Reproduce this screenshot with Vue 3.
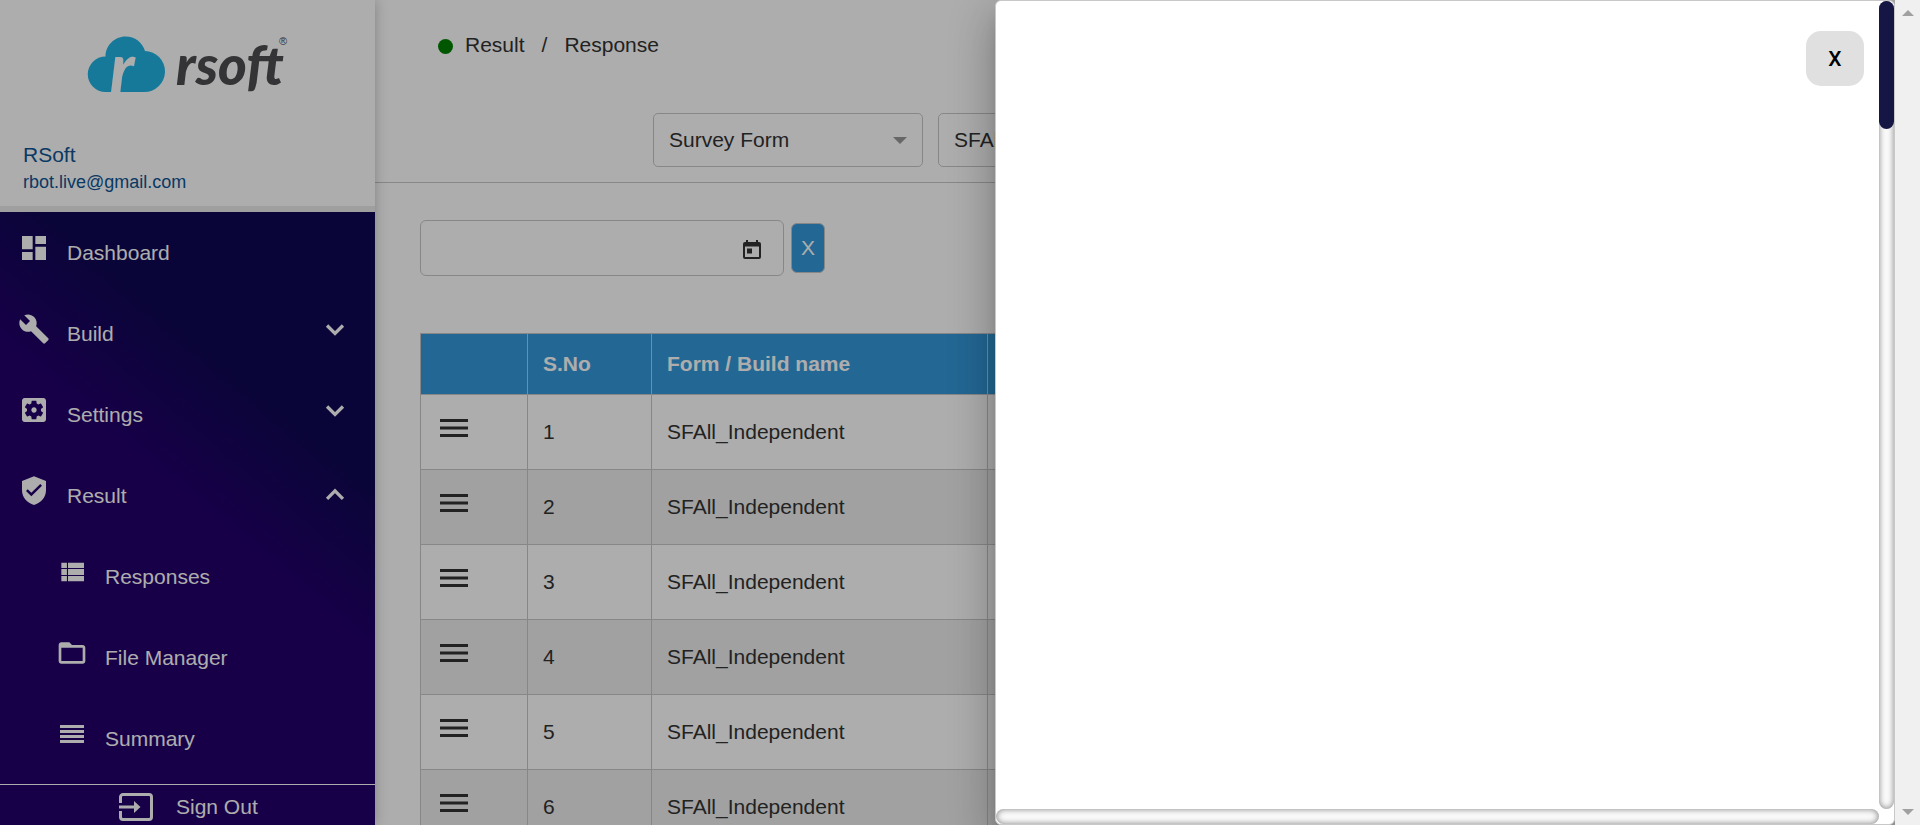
<script setup>
import { ref } from 'vue'

const menu = [
  { label: 'Dashboard', icon: 'M3 13h8V3H3v10zm0 8h8v-6H3v6zm10 0h8V11h-8v10zm0-18v6h8V3h-8z' },
  { label: 'Build', arrow: 'down', icon: 'M22.700 19l-9.100-9.100c.9-2.300.4-5-1.500-6.900-2-2-5-2.400-7.400-1.300L9 6 6 9 1.600 4.700C.4 7.100.9 10.100 2.900 12.100c1.900 1.900 4.600 2.400 6.900 1.500l9.100 9.100c.4.4 1 .4 1.400 0l2.300-2.300c.5-.4.5-1.100.1-1.400z' },
  { label: 'Settings', arrow: 'down', icon: 'M12 10c-1.100 0-2 .9-2 2s.9 2 2 2 2-.9 2-2-.9-2-2-2zm7-7H5c-1.110 0-2 .9-2 2v14c0 1.100.89 2 2 2h14c1.110 0 2-.9 2-2V5c0-1.100-.89-2-2-2zm-1.750 9c0 .23-.02.46-.05.68l1.480 1.160c.13.11.17.3.08.45l-1.400 2.420c-.09.15-.27.21-.43.15l-1.740-.7c-.36.28-.76.51-1.180.69l-.26 1.850c-.03.17-.18.3-.35.3h-2.800c-.17 0-.32-.13-.35-.29l-.26-1.850c-.43-.18-.82-.41-1.180-.69l-1.740.7c-.16.06-.34 0-.43-.15l-1.400-2.420c-.09-.15-.05-.34.08-.45l1.480-1.160c-.03-.23-.05-.46-.05-.69 0-.23.02-.46.05-.68l-1.480-1.160c-.13-.11-.17-.3-.08-.45l1.400-2.420c.09-.15.27-.21.43-.15l1.740.7c.36-.28.76-.51 1.180-.69l.26-1.850c.03-.17.18-.3.35-.3h2.800c.17 0 .32.13.35.29l.26 1.850c.43.18.82.41 1.180.69l1.740-.7c.16-.06.34 0 .43.15l1.400 2.420c.09.15.05.34-.08.45l-1.480 1.160c.03.23.05.46.05.69z' },
  { label: 'Result', arrow: 'up', icon: 'M12 1L3 4.500v7c0 5.300 3.800 9.600 9 11 5.200-1.400 9-5.700 9-11v-7L12 1zM10 16l-4-4 1.300-1.300 2.700 2.700 6.700-6.700L18 8l-8 8z' },
  { label: 'Responses', sub: true, icon: 'M4 5h4.200v4H4zM9 5h12v4H9zM4 9.750h4.200v4.500H4zM9 9.750h12v4.500H9zM4 15h4.200v4H4zM9 15h12v4H9z' },
  { label: 'File Manager', sub: true, icon: 'M20 6h-8l-2-2H4c-1.100 0-2 .9-2 2v12c0 1.100.9 2 2 2h16c1.100 0 2-.9 2-2V8c0-1.100-.9-2-2-2zm0 12H4V8h16v10z' },
  { label: 'Summary', sub: true, icon: 'M3 5.250h18v2.250H3zM3 9h18v2.250H3zM3 12.750h18v2.250H3zM3 16.500h18v2.250H3z' }
]

const rows = [1, 2, 3, 4, 5, 6].map((no) => ({ no, name: 'SFAll_Independent' }))
const formType = ref('Survey Form')
const formName = ref('SFAll_Independent')
const date = ref('')
</script>

<template>
  <div class="page">
    <aside class="sidebar">
      <header class="brand">
        <svg class="logo" viewBox="0 0 206 70" role="img" aria-label="rsoft">
          <path class="cloud" d="M18.500 60a17.500 17.500 0 0 1 0-35.500c0-11 9-20 20-20 9.500 0 17 6 19.500 14.500A20.500 20.500 0 0 1 57 60z" />
          <text class="cloud-letter" x="23" y="60">r</text>
          <text class="wordmark" x="89" y="53">rsoft</text>
          <text class="mark" x="192" y="13">®</text>
        </svg>
        <div class="user">RSoft</div>
        <div class="email">rbot.live@gmail.com</div>
      </header>
      <nav class="nav">
        <a v-for="item in menu" :key="item.label" href="#" class="nav-item" :class="{ sub: item.sub }">
          <svg class="icon" viewBox="0 0 24 24"><path :d="item.icon" fill-rule="evenodd" /></svg>
          <span class="nav-label">{{ item.label }}</span>
          <svg v-if="item.arrow" class="arrow" viewBox="0 0 24 24">
            <path v-if="item.arrow === 'down'" d="M6.700 9L12 14.300l5.300-5.300" />
            <path v-else d="M6.700 16.600L12 11.300l5.300 5.300" />
          </svg>
        </a>
      </nav>
      <button type="button" class="sign-out">
        <svg class="exit" viewBox="0 0 34 28">
          <path d="M1.500 10V4a2.500 2.500 0 0 1 2.500-2.500h26A2.500 2.500 0 0 1 32.500 4v20a2.500 2.500 0 0 1-2.500 2.500H4A2.500 2.500 0 0 1 1.500 24v-6" fill="none" stroke="#fff" stroke-width="3" />
          <path d="M0 12.500h15V8l6.500 6-6.500 6v-4.500H0z" />
        </svg>
        <span>Sign Out</span>
      </button>
    </aside>

    <main class="main">
      <header class="top">
        <div class="crumbs">
          <span class="dot"></span><span>Result</span><span class="slash">/</span><span>Response</span>
        </div>
        <div class="filters">
          <div class="picker">
            <select v-model="formType" aria-label="Form type"><option>Survey Form</option></select>
            <svg class="caret" viewBox="0 0 14 7"><path d="M0 0h14L7 7z" /></svg>
          </div>
          <div class="picker">
            <select v-model="formName" aria-label="Form name"><option>SFAll_Independent</option></select>
            <svg class="caret" viewBox="0 0 14 7"><path d="M0 0h14L7 7z" /></svg>
          </div>
        </div>
      </header>
      <section class="content">
        <div class="date-row">
          <label class="date">
            <input v-model="date" type="text" aria-label="Date" />
            <svg class="calendar" viewBox="0 0 18 19">
              <path fill-rule="evenodd" d="M3 0h2v2h8V0h2v2h1a2 2 0 0 1 2 2v13a2 2 0 0 1-2 2H2a2 2 0 0 1-2-2V4a2 2 0 0 1 2-2h1zM2 6.500V17h14V6.500zM4 8.500h5v5H4z" />
            </svg>
          </label>
          <button type="button" class="clear">X</button>
        </div>
        <table class="grid">
          <colgroup><col class="c-menu" /><col class="c-no" /><col class="c-name" /><col /></colgroup>
          <thead>
            <tr><th></th><th>S.No</th><th>Form / Build name</th><th></th></tr>
          </thead>
          <tbody>
            <tr v-for="row in rows" :key="row.no">
              <td>
                <button type="button" class="row-menu" aria-label="Row menu">
                  <svg viewBox="0 0 28 18"><path d="M0 0h28v3H0zM0 7.500h28v3H0zM0 15h28v3H0z" /></svg>
                </button>
              </td>
              <td>{{ row.no }}</td>
              <td>{{ row.name }}</td>
              <td></td>
            </tr>
          </tbody>
        </table>
      </section>
    </main>

    <div class="gutter">
      <svg viewBox="0 0 12 6"><path d="M0 6L6 0l6 6z" /></svg>
      <svg viewBox="0 0 12 6"><path d="M0 0h12L6 6z" /></svg>
    </div>

    <div class="overlay">
      <section class="drawer" role="dialog" aria-label="Response details">
        <div class="drawer-body">
          <button type="button" class="close">X</button>
        </div>
        <div class="track vertical"><div class="thumb"></div></div>
        <div class="track horizontal"></div>
      </section>
    </div>
  </div>
</template>

<style>
body {
  overflow: hidden;
}
</style>

<style scoped>
.page {
  position: relative;
  display: grid;
  grid-template-columns: 375px minmax(0, 1fr) 25px;
  height: 100vh;
  overflow: hidden;
  background: #fff;
  color: #333;
  font-family: "Liberation Sans", Arial, sans-serif;
  font-size: 21px;
  line-height: 24px;
}
button, input, select {
  font: inherit;
}
.sidebar {
  z-index: 1;
  display: flex;
  flex-direction: column;
  min-height: 0;
  background: #fff;
  box-shadow: 0 0 12px rgba(0, 0, 0, 0.25);
}
.brand {
  box-sizing: border-box;
  flex: none;
  height: 212px;
  padding: 32px 23px 0;
  border-bottom: 6px solid #ebebeb;
  color: #0e5595;
}
.logo {
  display: block;
  width: 206px;
  height: 70px;
  margin: 0 0 41px 64px;
}
.cloud {
  fill: #22b3e4;
}
.cloud-letter, .wordmark {
  font-family: Lato, sans-serif;
  font-style: italic;
  font-weight: 900;
}
.cloud-letter {
  fill: #fff;
  font-size: 68px;
}
.wordmark {
  fill: #4d4d50;
  font-size: 55px;
}
.mark {
  fill: #4d4d50;
  font-size: 11px;
}
.email {
  margin-top: 3px;
  font-size: 18px;
}
.nav {
  flex: 1;
  min-height: 0;
  overflow: hidden;
  background: linear-gradient(220deg, #0f0853 31%, #22006b 50%);
}
.nav-item {
  display: flex;
  align-items: center;
  height: 81px;
  padding: 0 22px 0 18px;
  color: #fff;
  text-decoration: none;
}
.nav-item.sub {
  padding-left: 56px;
}
.icon {
  width: 32px;
  height: 32px;
  margin: 0 17px 9px 0;
  fill: #fff;
}
.arrow {
  width: 36px;
  height: 36px;
  margin: 0 0 7px auto;
  fill: none;
  stroke: #fff;
  stroke-width: 2.200;
}
.sign-out {
  display: flex;
  flex: none;
  gap: 23px;
  align-items: center;
  height: 41px;
  padding: 3px 0 0 119px;
  border: 0;
  border-top: 1px solid #fff;
  background: #22006b;
  color: #fff;
}
.exit {
  width: 34px;
  height: 28px;
  fill: #fff;
}
.main {
  min-width: 0;
  overflow: hidden;
}
.top {
  padding: 33px 0 15px 63px;
  border-bottom: 1px solid #c8c8c8;
}
.crumbs {
  display: flex;
  align-items: center;
}
.dot {
  width: 15px;
  height: 15px;
  margin: 3px 12px 0 0;
  border-radius: 50%;
  background: #008000;
}
.slash {
  margin: 0 17px;
}
.filters {
  display: flex;
  gap: 15px;
  margin: 56px 0 0 215px;
}
.picker {
  position: relative;
  flex: none;
  width: 270px;
}
.picker select {
  box-sizing: border-box;
  display: block;
  width: 100%;
  height: 54px;
  padding: 0 36px 0 15px;
  border: 1px solid #c8c8c8;
  border-radius: 5px;
  appearance: none;
  background: transparent;
  color: #333;
}
.caret {
  position: absolute;
  top: 24px;
  right: 16px;
  width: 14px;
  height: 7px;
  fill: #999;
}
.content {
  padding: 37px 45px 0;
}
.date-row {
  display: flex;
  gap: 7px;
  align-items: center;
  margin-bottom: 57px;
}
.date {
  box-sizing: border-box;
  display: flex;
  align-items: center;
  width: 364px;
  height: 56px;
  padding: 0 22px 0 16px;
  border: 1px solid #c8c8c8;
  border-radius: 6px;
}
.date input {
  flex: 1;
  min-width: 0;
  padding: 0;
  border: 0;
  outline: 0;
  background: transparent;
}
.calendar {
  width: 18px;
  height: 19px;
  margin-top: 3px;
  fill: #333;
}
.clear {
  width: 34px;
  height: 50px;
  padding: 0;
  border: 1px solid #c8c8c8;
  border-radius: 6px;
  background: #3498db;
  color: #fff;
}
.grid {
  width: 100%;
  border-collapse: collapse;
  table-layout: fixed;
}
.c-menu {
  width: 107px;
}
.c-no {
  width: 124px;
}
.c-name {
  width: 336px;
}
.grid th, .grid td {
  box-sizing: border-box;
  padding: 0 15px;
  border: 1px solid #c8c8c8;
  text-align: left;
}
.grid th {
  height: 61px;
  background: #3498db;
  color: #fff;
}
.grid td {
  height: 75px;
}
.grid tbody tr:nth-child(even) {
  background: #ededed;
}
.row-menu {
  display: block;
  padding: 0 4px 8px;
  border: 0;
  background: transparent;
}
.row-menu svg {
  display: block;
  width: 28px;
  height: 18px;
  fill: #333;
}
.gutter {
  display: flex;
  flex-direction: column;
  align-items: center;
  justify-content: space-between;
  padding: 10px 0;
  background: #f0f0f0;
}
.gutter svg {
  width: 12px;
  height: 6px;
  fill: #a0a0a0;
}
.overlay {
  position: absolute;
  z-index: 2;
  inset: 0 25px 0 0;
  overflow: hidden;
  background: rgba(0, 0, 0, 0.32);
}
.drawer {
  position: absolute;
  inset: 0 0 0 auto;
  box-sizing: border-box;
  display: grid;
  grid-template-rows: minmax(0, 1fr) 15px;
  grid-template-columns: minmax(0, 1fr) 15px;
  width: 47.5%;
  border: 1px solid #c8c8c8;
  border-radius: 6px;
  background: #fff;
  box-shadow: 0 11px 15px -7px rgba(0, 0, 0, 0.2), 0 24px 38px 3px rgba(0, 0, 0, 0.14), 0 9px 46px 8px rgba(0, 0, 0, 0.12);
}
.drawer-body {
  display: flex;
  align-items: flex-start;
  justify-content: flex-end;
  padding: 30px 15px;
}
.close {
  width: 58px;
  height: 55px;
  padding: 0;
  border: 0;
  border-radius: 15px;
  background: #e0e0e0;
  color: #000;
  font-family: Roboto, sans-serif;
  font-weight: 500;
}
.track {
  border-radius: 8px;
  background: #fafafa;
  box-shadow: inset 0 0 6px rgba(0, 0, 0, 0.5);
}
.thumb {
  height: 128px;
  border-radius: 8px;
  background: #161645;
}
</style>
